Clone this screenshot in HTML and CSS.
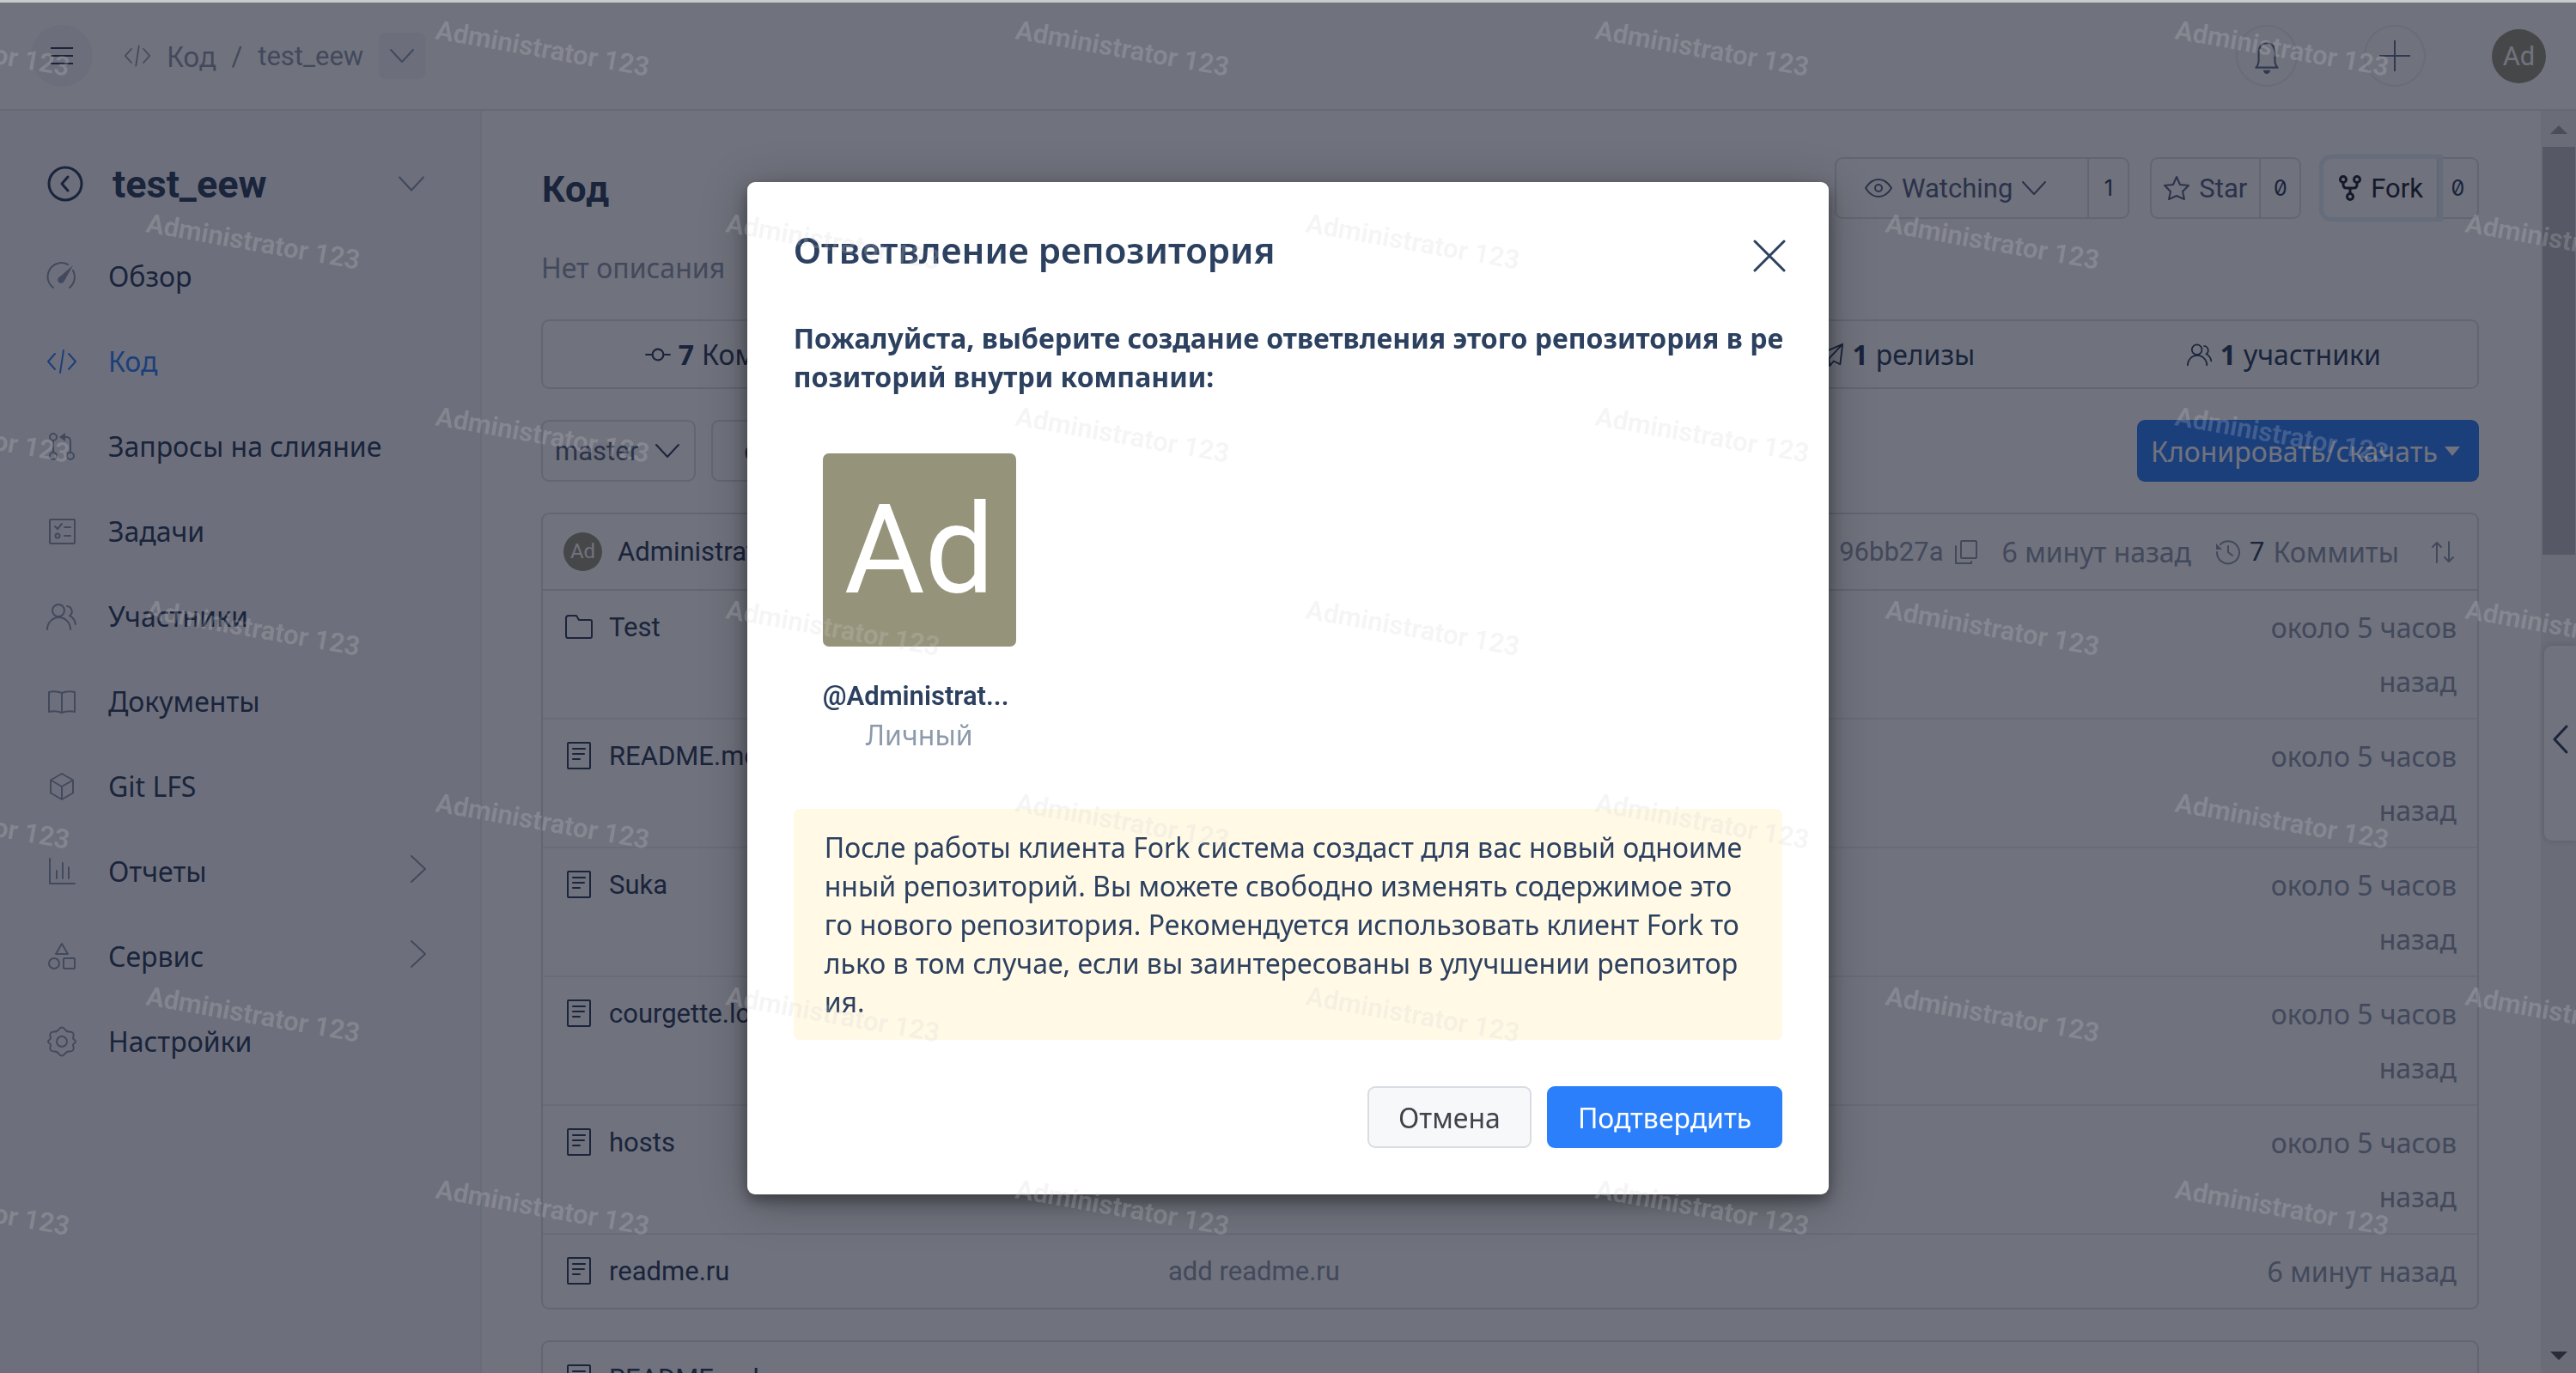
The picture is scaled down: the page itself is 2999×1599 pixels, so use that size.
FILE: index.html
```html
<!DOCTYPE html>
<html lang="ru">
<head>
<meta charset="utf-8">
<title>test_eew</title>
<link rel="stylesheet" href="styles.css">
</head>
<body>
<svg class="sprite" aria-hidden="true">
  <symbol id="i-code" viewBox="0 0 36 36"><path d="M10 9 2 18l8 9M26 9l8 9-8 9M20 5l-4 26"/></symbol>
  <symbol id="i-down" viewBox="0 0 28 28"><path d="M1 7l13 14L27 7"/></symbol>
  <symbol id="i-right" viewBox="0 0 20 34"><path d="M2 2l16 15L2 32"/></symbol>
  <symbol id="i-gauge" viewBox="0 0 36 36"><path d="M8 31A16 16 0 0 1 25 4M31 11a16 16 0 0 1-4 20"/><path class="fill" d="M31 5 21 23a4 4 0 1 1-5-5z"/></symbol>
  <symbol id="i-merge" viewBox="0 0 36 36"><circle cx="8" cy="7" r="4"/><circle cx="8" cy="29" r="4"/><circle cx="28" cy="29" r="4"/><path d="M8 11v14M28 25V12q0-5-5-5h-4"/><path class="fill" d="M22 2v10l-7-5z"/></symbol>
  <symbol id="i-tasks" viewBox="0 0 36 36"><rect x="4" y="4" width="29" height="28" rx="1"/><path d="M10 12l3 3 5-6M21 13h7M21 23h7"/><circle cx="13" cy="23" r="2.500"/></symbol>
  <symbol id="i-users" viewBox="0 0 36 36"><circle cx="14" cy="11" r="7"/><path d="M1 33a13.500 14 0 0 1 27 0M24 6a6 6 0 0 1 3 11q6 3 7 10"/></symbol>
  <symbol id="i-book" viewBox="0 0 36 36"><path d="M18 8q-7-3-15-1v23q8-2 15 1 7-3 15-1V7q-8-2-15 1zv23"/></symbol>
  <symbol id="i-cube" viewBox="0 0 36 36"><path d="M18 3 31 10.500v15L18 33 5 25.500v-15zM5 10.500 18 18l13-7.500M18 18v15"/></symbol>
  <symbol id="i-chart" viewBox="0 0 36 36"><path d="M4 3v29h29M12 17v9M19 8v18M26 13v13"/></symbol>
  <symbol id="i-shapes" viewBox="0 0 36 36"><path d="M18 3l7 12H11z"/><circle cx="9" cy="26" r="6"/><rect x="20" y="20" width="13" height="12" rx="1"/></symbol>
  <symbol id="i-gear" viewBox="0 0 36 36"><circle cx="18" cy="18" r="6"/><path d="M18 1.500c3 0 4 3.500 6 4.500s5-.500 7 2 0 4.500 0 6 3 2 3 4-3 2.500-3 4 2 3.500 0 6-5 1-7 2-3 4.500-6 4.500-4-3.500-6-4.500-5 .500-7-2 0-4.500 0-6-3-2-3-4 3-2.500 3-4-2-3.500 0-6 5-1 7-2 3-4.500 6-4.500z"/></symbol>
  <symbol id="i-commit" viewBox="0 0 28 28"><circle cx="14" cy="14" r="6"/><path d="M1 14h7M20 14h7"/></symbol>
  <symbol id="i-plane" viewBox="0 0 32 32"><path d="M2 15 30 3l-3 25-8-4-5 6-1-9zM30 3 13 21"/></symbol>
  <symbol id="i-eye" viewBox="0 0 32 32"><path d="M1 16Q7 6 16 6t15 10q-6 10-15 10T1 16z"/><circle cx="16" cy="16" r="4"/></symbol>
  <symbol id="i-star" viewBox="0 0 30 30"><path d="M15 2l4 9 10 1-7 7 2 9-9-4-9 4 2-9-7-7 10-1z"/></symbol>
  <symbol id="i-fork" viewBox="0 0 26 30"><circle cx="5" cy="5" r="3.500"/><circle cx="21" cy="5" r="3.500"/><circle cx="13" cy="25" r="3.500"/><path d="M5 9v2q0 4 4 4h8q4 0 4-4V9M13 15v6"/></symbol>
  <symbol id="i-folder" viewBox="0 0 34 32"><path d="M2 26V6q0-3 3-3h9l3 5h13q2 0 2 2v17q0 2-2 2H4q-2 0-2-3z"/></symbol>
  <symbol id="i-file" viewBox="0 0 34 34"><rect x="4" y="2" width="26" height="30" rx="1"/><path d="M10 9h14M10 15h13M10 21h8"/></symbol>
  <symbol id="i-copy" viewBox="0 0 28 28"><rect x="8" y="1" width="18" height="20" rx="1"/><path d="M2 7v20h18v-2"/></symbol>
  <symbol id="i-history" viewBox="0 0 30 30"><path d="M2 15A13 13 0 1 0 6 6M15 8v7l5 4"/><path class="fill" d="M1 5v7h7z"/></symbol>
  <symbol id="i-sort" viewBox="0 0 26 26"><path d="M6 25V2M1 7l5-5 5 5M20 1v23M15 19l5 5 5-5"/></symbol>
  <symbol id="i-bell" viewBox="0 0 32 40"><path d="M4 33q3-3 3-8v-7Q7 6 16 6t9 12v7q0 5 3 8z"/><path class="fill" d="M12 36h8q-1 4-4 4t-4-4z"/></symbol>
</svg>

<div class="app">
  <header class="top">
    <button class="burger" aria-label="Меню"><svg viewBox="0 0 26 22"><path d="M0 2h26M0 11h26M0 20h26"/></svg></button>
    <nav class="crumbs">
      <svg class="crumb-icon"><use href="#i-code"/></svg>
      <a class="ru" href="#">Код</a><span>/</span><a href="#">test_eew</a>
      <button class="crumb-more" aria-label="Ещё"><svg><use href="#i-down"/></svg></button>
    </nav>
    <div class="top-right">
      <button class="round" aria-label="Уведомления"><svg class="bell"><use href="#i-bell"/></svg></button>
      <button class="round" aria-label="Создать"><svg viewBox="0 0 36 36"><path d="M18 0v36M0 18h36"/></svg></button>
      <span class="avatar">Ad</span>
    </div>
  </header>

  <div class="body">
    <aside class="side">
      <div class="project">
        <svg viewBox="0 0 42 42"><circle cx="21" cy="21" r="19"/><path d="M24 13l-7 8 7 8"/></svg>
        <strong>test_eew</strong>
        <svg class="chev"><use href="#i-down"/></svg>
      </div>
      <nav class="menu ru">
        <a href="#"><svg><use href="#i-gauge"/></svg>Обзор</a>
        <a href="#" class="on"><svg><use href="#i-code"/></svg>Код</a>
        <a href="#"><svg><use href="#i-merge"/></svg>Запросы на слияние</a>
        <a href="#"><svg><use href="#i-tasks"/></svg>Задачи</a>
        <a href="#"><svg><use href="#i-users"/></svg>Участники</a>
        <a href="#"><svg><use href="#i-book"/></svg>Документы</a>
        <a href="#"><svg><use href="#i-cube"/></svg>Git LFS</a>
        <a href="#"><svg><use href="#i-chart"/></svg>Отчеты<svg class="more"><use href="#i-right"/></svg></a>
        <a href="#"><svg><use href="#i-shapes"/></svg>Сервис<svg class="more"><use href="#i-right"/></svg></a>
        <a href="#"><svg><use href="#i-gear"/></svg>Настройки</a>
      </nav>
    </aside>

    <main class="main">
      <div class="title-row">
        <h1>Код</h1>
        <div class="actions">
          <div class="split watch"><button><svg class="eye"><use href="#i-eye"/></svg>Watching<svg class="caret"><use href="#i-down"/></svg></button><span>1</span></div>
          <div class="split"><button><svg><use href="#i-star"/></svg>Star</button><span>0</span></div>
          <div class="split fork"><button><svg><use href="#i-fork"/></svg>Fork</button><span>0</span></div>
        </div>
      </div>
      <p class="desc">Нет описания</p>
      <ul class="stats">
        <li><svg><use href="#i-commit"/></svg><b>7</b> Коммиты</li>
        <li></li>
        <li></li>
        <li><svg><use href="#i-plane"/></svg><b>1</b> релизы</li>
        <li><svg><use href="#i-users"/></svg><b>1</b> участники</li>
      </ul>
      <div class="tools">
        <button class="branch">master<svg><use href="#i-down"/></svg></button>
        <button class="path">code</button>
        <button class="clone">Клонировать/скачать<i></i></button>
      </div>
      <section class="panel">
        <div class="commit">
          <span class="avatar small">Ad</span><span class="author">Administrator</span>
          <div class="commit-meta">
            <span class="sha">96bb27a<svg><use href="#i-copy"/></svg></span>
            <span>6 минут назад</span>
            <span class="count"><svg><use href="#i-history"/></svg><em>7</em> Коммиты</span>
            <svg class="sort"><use href="#i-sort"/></svg>
          </div>
        </div>
        <table class="files">
          <tr><td class="name"><svg><use href="#i-folder"/></svg><a href="#">Test</a></td><td class="msg"></td><td class="when">около 5 часов назад</td></tr>
          <tr><td class="name"><svg><use href="#i-file"/></svg><a href="#">README.md</a></td><td class="msg"></td><td class="when">около 5 часов назад</td></tr>
          <tr><td class="name"><svg><use href="#i-file"/></svg><a href="#">Suka</a></td><td class="msg"></td><td class="when">около 5 часов назад</td></tr>
          <tr><td class="name"><svg><use href="#i-file"/></svg><a href="#">courgette.log</a></td><td class="msg"></td><td class="when">около 5 часов назад</td></tr>
          <tr><td class="name"><svg><use href="#i-file"/></svg><a href="#">hosts</a></td><td class="msg"></td><td class="when">около 5 часов назад</td></tr>
          <tr><td class="name"><svg><use href="#i-file"/></svg><a href="#">readme.ru</a></td><td class="msg">add readme.ru</td><td class="when">6 минут назад</td></tr>
        </table>
      </section>
      <section class="panel readme">
        <div class="readme-head"><svg><use href="#i-file"/></svg>README.md</div>
      </section>
    </main>
    <div class="scroll">
      <svg class="arrow" viewBox="0 0 20 10"><path d="M10 0l10 10H0z"/></svg>
      <div class="thumb"></div>
      <svg class="arrow last" viewBox="0 0 20 10"><path d="M0 0h20L10 10z"/></svg>
    </div>
  </div>
  <button class="drawer" aria-label="Открыть панель"><svg viewBox="0 0 18 34"><path d="M16 2 2 17l14 15"/></svg></button>
</div>

<div class="overlay">
  <div class="modal" role="dialog" aria-labelledby="dlg-title">
    <div class="modal-head">
      <h2 id="dlg-title">Ответвление репозитория</h2>
      <button class="close" aria-label="Закрыть"><svg viewBox="0 0 38 38"><path d="M2 2l34 34M36 2 2 36"/></svg></button>
    </div>
    <p class="ask">Пожалуйста, выберите создание ответвления этого репозитория в ре<br>позиторий внутри компании:</p>
    <div class="target">
      <div class="target-pic">Ad</div>
      <div class="target-name">@Administrat...</div>
      <div class="target-kind">Личный</div>
    </div>
    <p class="note">После работы клиента Fork система создаст для вас новый одноиме<br>нный репозиторий. Вы можете свободно изменять содержимое это<br>го нового репозитория. Рекомендуется использовать клиент Fork то<br>лько в том случае, если вы заинтересованы в улучшении репозитор<br>ия.</p>
    <div class="buttons">
      <button class="cancel">Отмена</button>
      <button class="ok">Подтвердить</button>
    </div>
  </div>
</div>

<svg class="watermark" aria-hidden="true">
  <defs>
    <pattern id="wm" x="100" y="0" width="675" height="450" patternUnits="userSpaceOnUse">
      <text transform="translate(69 270) rotate(10)">Administrator 123</text>
      <text transform="translate(406 45) rotate(10)">Administrator 123</text>
    </pattern>
  </defs>
  <rect width="100%" height="100%" fill="url(#wm)"/>
</svg>
</body>
</html>
```
FILE: styles.css
```css
:root {
  --ink: #293c5a;
  --muted: #8c9aac;
  --line: #dde1e7;
  --line-soft: #edf0f3;
  --blue: #2b7ffa;
  --cyr: "Noto Sans", "Open Sans", sans-serif;
}
* { box-sizing: border-box; }
body {
  margin: 0;
  height: 100vh;
  overflow: hidden;
  background: #fff;
  color: var(--ink);
  font: 31px/45px Roboto, "Noto Sans", sans-serif;
}
h1, h2, p, ul { margin: 0; padding: 0; }
a { color: inherit; text-decoration: none; }
button { font: inherit; color: inherit; padding: 0; border: 0; background: none; }
svg { flex: none; fill: none; stroke: currentColor; stroke-width: 2; stroke-linecap: round; stroke-linejoin: round; }
.fill { fill: currentColor; stroke: none; }
.sprite { display: none; }
.ru { font-family: var(--cyr); font-size: 32px; }

.app { height: 100vh; display: flex; flex-direction: column; border-top: 3px solid #c9cacb; }
.top { flex: none; display: flex; align-items: center; height: 126px; padding: 0 35px 0 36px; border-bottom: 2px solid #e6e9ee; }
.burger { width: 72px; height: 72px; border-radius: 50%; background: #f5f6f9; display: grid; place-items: center; }
.burger svg { width: 26px; height: 22px; stroke-linecap: butt; }
.crumbs { display: flex; align-items: center; margin-left: 36px; color: var(--muted); }
.crumbs span { margin: 0 18px; }
.crumb-icon { width: 32px; height: 32px; margin-right: 18px; }
.crumb-more { width: 54px; height: 54px; margin-left: 18px; border-radius: 7px; background: #f5f6f9; display: grid; place-items: center; }
.crumb-more svg { width: 28px; height: 28px; }
.top-right { margin-left: auto; display: flex; align-items: center; color: #60708c; }
.round { width: 72px; height: 72px; margin-right: 77px; border-radius: 50%; border: 2px solid #eef0f4; display: grid; place-items: center; }
.round svg { width: 36px; height: 36px; }
.round .bell { width: 34px; height: 42px; }
.avatar { flex: none; width: 63px; height: 63px; border-radius: 50%; background: #95937a; color: #fff; display: grid; place-items: center; font-size: 31px; }
.avatar.small { width: 45px; height: 45px; font-size: 24px; }

.body { flex: 1; min-height: 0; display: flex; }
.side { flex: none; width: 561px; border-right: 2px solid #edeff4; background: #f8f9fc; padding-top: 58px; }
.project { display: flex; align-items: center; height: 54px; padding: 0 65px 0 55px; font-size: 45px; }
.project svg { width: 42px; height: 42px; stroke-width: 3; }
.project strong { margin-left: 34px; }
.project .chev { width: 30px; height: 30px; margin-left: auto; color: var(--muted); stroke-width: 2; }
.menu { padding-top: 31px; }
.menu a { display: flex; align-items: center; height: 99px; padding: 0 62px 0 54px; }
.menu svg { width: 36px; height: 36px; margin-right: 36px; color: var(--muted); }
.menu a.on, .menu a.on svg { color: var(--blue); }
.menu .more { width: 20px; height: 34px; margin: 0 0 6px auto; }

.main { flex: 1; min-width: 0; overflow: hidden; padding: 54px 72px 0 69px; }
.title-row { display: flex; align-items: center; justify-content: space-between; height: 72px; }
h1 { font: 700 41px/56px var(--cyr); }
.actions { display: flex; gap: 24px; }
.split { display: flex; height: 72px; border: 2px solid var(--line); border-radius: 9px; color: #53637f; }
.split button { display: flex; align-items: center; gap: 11px; padding: 0 14px; border-right: 2px solid var(--line); }
.split svg { width: 30px; height: 30px; }
.split .eye { width: 32px; height: 32px; }
.split .caret { width: 28px; height: 28px; }
.split span { width: 45px; display: grid; place-items: center; font: 25px Inter, sans-serif; font-feature-settings: "zero"; color: var(--ink); }
.watch button { padding: 0 48px 0 33px; }
.fork button { padding: 0 16px 0 18px; color: #1c2433; border-radius: 9px 0 0 9px; box-shadow: 0 0 0 5px #e4f0fb; }
.fork svg { width: 26px; height: 30px; stroke-width: 3; }
.desc { margin: 25px 0 28px; font: 32px/64px var(--cyr); color: var(--muted); }
.stats { display: grid; grid-template-columns: repeat(5, 1fr); height: 81px; border: 2px solid var(--line); border-radius: 9px; list-style: none; font: 32px/45px var(--cyr); }
.stats li { display: flex; align-items: center; justify-content: center; gap: 9px; }
.stats svg { width: 30px; height: 30px; }
.tools { display: flex; gap: 18px; margin: 36px 0; height: 72px; }
.branch { display: flex; align-items: center; gap: 20px; padding: 0 17px 0 14px; border: 2px solid var(--line); border-radius: 9px; color: #53637f; }
.branch svg { width: 28px; height: 28px; color: var(--ink); }
.path { padding: 0 36px; border: 2px solid var(--line); border-radius: 9px; }
.clone { margin-left: auto; display: flex; align-items: center; gap: 8px; padding: 0 22px 0 16px; border-radius: 9px; background: var(--blue); color: #fff; font: 32px/45px var(--cyr); }
.clone i { border: solid transparent; border-width: 11px 9px 0; border-top-color: #fff; }

.panel { border: 2px solid var(--line); border-radius: 9px; }
.commit { display: flex; align-items: center; height: 89px; padding: 0 27px 0 24px; border-bottom: 2px solid var(--line); }
.author { margin-left: 18px; }
.commit-meta { margin-left: auto; display: flex; align-items: center; font: 32px/45px var(--cyr); color: var(--muted); }
.commit-meta span { display: flex; align-items: center; margin-right: 28px; }
.commit-meta .sha { font-family: Roboto, sans-serif; font-size: 31px; gap: 12px; }
.commit-meta .count { gap: 10px; margin-right: 38px; }
.commit-meta em { font: 31px Roboto, sans-serif; color: var(--ink); }
.sha svg { width: 28px; height: 28px; }
.count svg { width: 30px; height: 30px; }
.sort { width: 26px; height: 26px; }
.files { width: 100%; table-layout: fixed; border-collapse: collapse; line-height: 63px; }
.files td { padding: 11px 0; vertical-align: top; }
.files tr + tr td { border-top: 2px solid var(--line-soft); }
.files .name { width: 728px; padding-left: 25px; }
.name svg { width: 34px; height: 34px; margin-right: 18px; vertical-align: -6px; }
.files .msg { color: var(--muted); }
.files .when { width: 270px; padding-right: 24px; text-align: right; font: 32px/63px var(--cyr); color: var(--muted); }
.readme { margin-top: 36px; height: 300px; }
.readme-head { display: flex; align-items: center; gap: 18px; height: 84px; padding-left: 25px; }
.readme-head svg { width: 34px; height: 34px; }

.scroll { flex: none; width: 41px; background: #f1f1f3; display: flex; flex-direction: column; align-items: center; padding: 17px 0 15px; }
.thumb { width: 38px; height: 33%; margin-top: 15px; background: #bfc0c3; }
.arrow { width: 20px; height: 10px; fill: #a3a3a3; stroke: none; }
.arrow.last { margin-top: auto; fill: #505050; }
.drawer { position: absolute; right: 0; top: 752px; width: 37px; height: 227px; padding-bottom: 9px; border-radius: 9px 0 0 9px; background: #fff; box-shadow: 0 0 9px rgba(0, 0, 0, .2); display: grid; place-items: center; }
.drawer svg { width: 18px; height: 34px; stroke-width: 3; }

.overlay { position: fixed; inset: 3px 0 0; background: rgba(17, 20, 38, .6); padding-top: 209px; }
.modal { width: 42%; margin: 0 auto; padding: 51px 54px 54px; border-radius: 9px; background: #fff; box-shadow: 0 7px 16px rgba(0, 0, 0, .35), 0 9px 54px rgba(0, 0, 0, .3); font: 32px/45px var(--cyr); color: #2c405f; }
.modal-head { display: flex; justify-content: space-between; margin-bottom: 52px; }
h2 { font: 600 42px/56px var(--cyr); }
.close { width: 38px; height: 38px; margin: 16px -4px 0 0; }
.close svg { display: block; stroke-width: 3; }
.ask { font-weight: 700; white-space: nowrap; }
.target { width: 225px; margin: 67px 0 64px 34px; text-align: center; }
.target-pic { height: 225px; margin-bottom: 35px; border-radius: 7px; background: #95937a; color: #fff; font: 144px/225px Roboto, sans-serif; }
.target-name { font: 600 31px/45px Roboto, sans-serif; text-align: left; }
.target-kind { color: var(--muted); }
.note { padding: 22px 36px; border-radius: 7px; background: #fff9e6; }
.buttons { display: flex; justify-content: flex-end; gap: 18px; margin-top: 54px; }
.buttons button { height: 72px; padding: 0 36px; border-radius: 9px; }
.buttons .cancel { padding: 0 34px; border: 2px solid #d9dde3; background: #f7f8fa; color: #40434a; }
.ok { background: var(--blue); color: #fff; }

.watermark { position: fixed; inset: 0; width: 100%; height: 100%; pointer-events: none; stroke: none; }
.watermark text { font: 600 31px Roboto, sans-serif; fill: rgba(210, 210, 210, .22); }
```
